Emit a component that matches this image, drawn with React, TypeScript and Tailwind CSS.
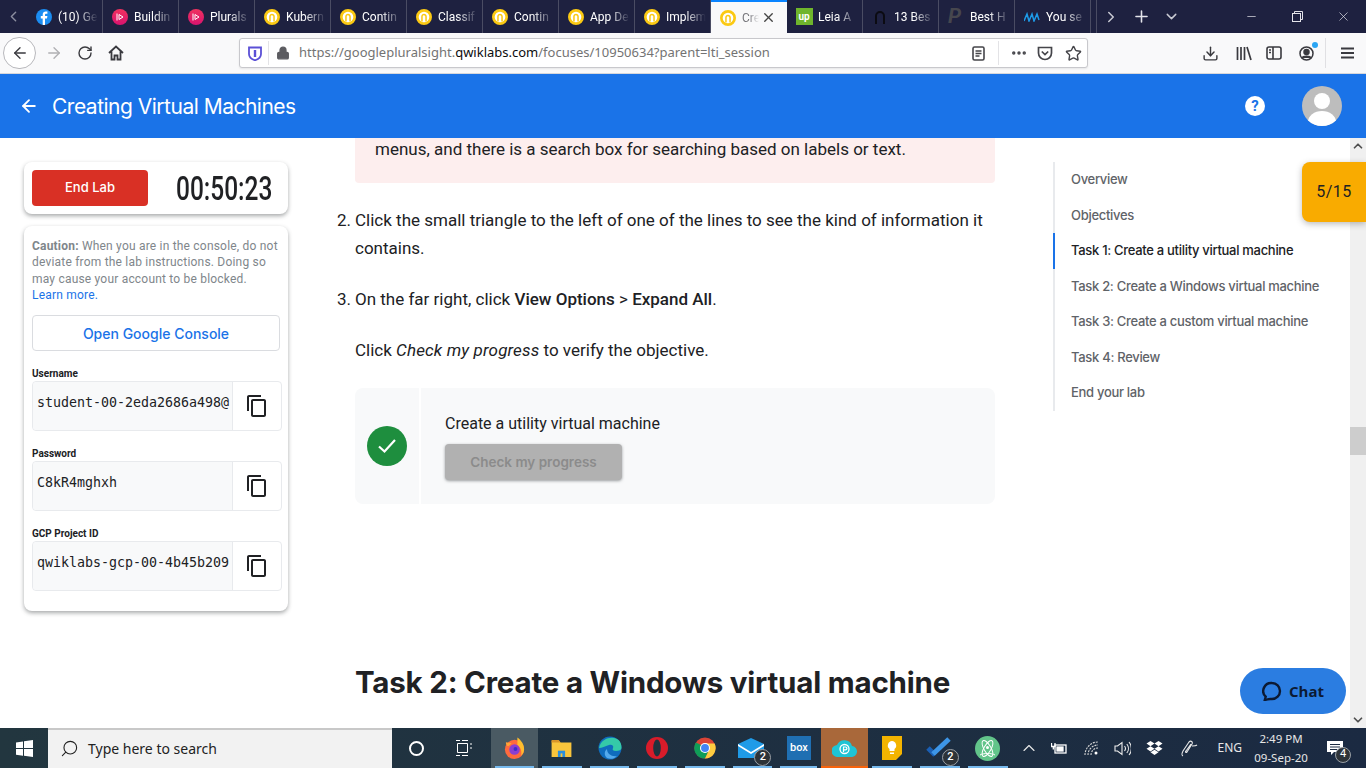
import { ArrowLeft, ArrowRight, ChevronDown, ChevronLeft, ChevronRight, ChevronUp, Download, Lock, Minus, MoreHorizontal, Plus, RotateCw, Search, Star, X } from "lucide-react";
import type { ReactNode } from "react";

function Qwik() {
  return (
    <svg width="18" height="18" viewBox="0 0 18 18">
      <circle cx="9" cy="9" r="7.5" fill="#fff" stroke="#fbc913" strokeWidth="3" />
      <path d="M6.700 14V8.500a2.300 2.300 0 0 1 4.600 0V14" fill="none" stroke="#fbc913" strokeWidth="1.700" />
    </svg>
  );
}

function Plural() {
  return (
    <svg width="16" height="16" viewBox="0 0 16 16">
      <defs>
        <linearGradient id="pl" x1="0" y1="0" x2="0" y2="1">
          <stop offset="0" stopColor="#f0325f" />
          <stop offset="1" stopColor="#d8136f" />
        </linearGradient>
      </defs>
      <circle cx="8" cy="8" r="8" fill="url(#pl)" />
      <path d="M5 4.500v7M7 5.500v5l4-2.500z" fill="none" stroke="#fff" strokeWidth="1" />
    </svg>
  );
}

function Fb() {
  return (
    <svg width="16" height="16" viewBox="0 0 16 16">
      <circle cx="8" cy="8" r="8" fill="#1b8df2" />
      <path d="M9 16V9.400h2l.4-2.300H9V5.800c0-.7.3-1.100 1.200-1.100h1.200V2.600C11 2.500 10.400 2.400 9.800 2.400 8 2.400 6.700 3.500 6.700 5.500v1.600H4.800v2.300h1.900V16z" fill="#fff" />
    </svg>
  );
}

const tabs: { icon: ReactNode; label: string; active?: boolean }[] = [
  { icon: <Fb />, label: "(10) Ge" },
  { icon: <Plural />, label: "Buildin" },
  { icon: <Plural />, label: "Plurals" },
  { icon: <Qwik />, label: "Kubern" },
  { icon: <Qwik />, label: "Contin" },
  { icon: <Qwik />, label: "Classif" },
  { icon: <Qwik />, label: "Contin" },
  { icon: <Qwik />, label: "App De" },
  { icon: <Qwik />, label: "Implem" },
  { icon: <Qwik />, label: "Cre", active: true },
  {
    icon: (
      <div className="flex h-[17px] w-[17px] shrink-0 items-center justify-center bg-[#6fb52c] text-[10px] font-bold lowercase leading-none text-white">
        up
      </div>
    ),
    label: "Leia A",
  },
  {
    icon: (
      <svg width="16" height="16" viewBox="0 0 16 16">
        <path d="M4 15V7a4 4 0 0 1 8 0v8" fill="none" stroke="#0b0b12" strokeWidth="2" />
      </svg>
    ),
    label: "13 Bes",
  },
  {
    icon: <span className="w-4 text-[21px] font-bold italic leading-none text-[#46464e]">P</span>,
    label: "Best H",
  },
  {
    icon: (
      <svg width="16" height="10" viewBox="0 0 16 10">
        <path d="M0 9l3-7 2 7 3-7 2 7 3-7 2 6" fill="none" stroke="#1e9be8" strokeWidth="1.500" />
      </svg>
    ),
    label: "You se",
  },
];

function TabBar() {
  return (
    <div className="flex h-[33px] shrink-0 items-stretch bg-[#1e2140] text-xs text-white">
      <div className="flex w-[27px] items-center justify-center text-[#8b8d9e]">
        <ChevronLeft size={17} strokeWidth={2} />
      </div>
      {tabs.map((t, i) => (
        <div
          key={i}
          className={
            t.active
              ? "flex w-[76px] items-center gap-[6px] border-t-[2px] border-[#0a84ff] bg-[#f9f9fa] pl-[9px] text-[#77777c]"
              : "flex w-[76px] items-center gap-[6px] border-r border-[#4a4c63] pl-[9px]"
          }
        >
          <div className="flex w-4 shrink-0 items-center justify-center">{t.icon}</div>
          <span
            className={
              t.active
                ? "w-[17px] overflow-hidden whitespace-nowrap [mask-image:linear-gradient(to_right,black_40%,transparent)]"
                : "w-[42px] overflow-hidden whitespace-nowrap [mask-image:linear-gradient(to_right,black_45%,transparent_95%)]"
            }
          >
            {t.label}
          </span>
          {t.active && <X size={15} strokeWidth={2.200} className="-ml-[4px] text-[#444]" />}
        </div>
      ))}
      <div className="ml-[5px] flex w-[28px] items-center justify-center border-l border-[#4a4c63] text-[#c9cad3]">
        <ChevronRight size={18} strokeWidth={2} />
      </div>
      <div className="flex w-[34px] items-center justify-center text-[#e4e4ea]">
        <Plus size={19} strokeWidth={2} />
      </div>
      <div className="flex w-[26px] items-center justify-center text-[#c9cad3]">
        <ChevronDown size={17} strokeWidth={2} />
      </div>
      <div className="ml-auto flex items-stretch text-[#e4e4ea]">
        <div className="flex w-[46px] items-center justify-center">
          <Minus size={13} strokeWidth={1.300} />
        </div>
        <div className="flex w-[46px] items-center justify-center">
          <svg width="11" height="11" viewBox="0 0 11 11" fill="none" stroke="currentColor">
            <rect x="0.5" y="2.500" width="8" height="8" />
            <path d="M2.500 2.500v-2h8v8h-2" />
          </svg>
        </div>
        <div className="flex w-[46px] items-center justify-center">
          <X size={15} strokeWidth={1.100} />
        </div>
      </div>
    </div>
  );
}

function NavBar() {
  return (
    <div className="flex h-[41px] shrink-0 items-center border-b border-[#d7d7db] bg-[#f9f9fa] text-[#3a3a3f]">
      <div className="ml-[3px] flex h-[32px] w-[33px] items-center justify-center rounded-full border border-[#b8b8bc] bg-white">
        <ArrowLeft size={18} strokeWidth={1.800} />
      </div>
      <ArrowRight size={18} strokeWidth={1.800} className="ml-[9px] text-[#b0b0b3]" />
      <RotateCw size={16} strokeWidth={2.100} className="ml-[14px]" />
      <svg width="16" height="16" viewBox="0 0 16 16" className="ml-[15px]" fill="none" stroke="currentColor" strokeWidth="1.800">
        <path d="M1 8l7-6.500L15 8M3.500 6.500V14.500h3v-4h3v4h3V6.500" />
      </svg>
      <div className="ml-[115px] flex h-[30px] w-[849px] items-center rounded-[3px] border border-[#c8c8cc] bg-white pl-[8px] shadow-[0_1px_2px_rgba(0,0,0,0.08)]">
        <svg width="14" height="15" viewBox="0 0 14 15">
          <path d="M1 1.500h12V8c0 3-3 5.300-6 6.300C4 13.300 1 11 1 8z" fill="none" stroke="#5b50d6" strokeWidth="1.800" />
          <path d="M7 4v7" stroke="#5b50d6" strokeWidth="2.400" />
        </svg>
        <div className="ml-[6px] h-[24px] w-px bg-[#e3e3e6]" />
        <Lock size={14} strokeWidth={2.400} className="ml-[7px] fill-[#5c5c61] text-[#5c5c61]" />
        <span className="ml-[9px] whitespace-nowrap font-['Noto_Sans',sans-serif] text-[13px] text-[#737373]">
          https://googlepluralsight.<span className="text-[#0c0c0d]">qwiklabs.com</span>/focuses/10950634?parent=lti_session
        </span>
        <div className="ml-auto flex items-center text-[#45454a]">
          <svg width="13" height="15" viewBox="0 0 13 15" fill="none" stroke="currentColor" strokeWidth="1.600">
            <rect x="1" y="1" width="11" height="13" rx="1.500" />
            <path d="M3.500 5h6M3.500 7.500h6M3.500 10h4" />
          </svg>
          <div className="ml-[13px] h-[24px] w-px bg-[#e3e3e6]" />
          <MoreHorizontal size={18} strokeWidth={2.600} className="ml-[11px]" />
          <svg width="16" height="15" viewBox="0 0 16 15" className="ml-[9px]" fill="none" stroke="currentColor" strokeWidth="1.700">
            <path d="M1.500 1.500h13V7a6.500 6.500 0 0 1-13 0z" />
            <path d="M4.800 5.500L8 8.600l3.200-3.100" />
          </svg>
          <Star size={17} strokeWidth={2} className="ml-[12px] mr-[5px]" />
        </div>
      </div>
      <Download size={17} strokeWidth={2} className="ml-[114px]" />
      <svg width="16" height="15" viewBox="0 0 16 15" className="ml-[17px]" stroke="currentColor" strokeWidth="1.700" fill="none">
        <path d="M1.500 1v13M5 1v13M8.500 1v13M11 1l4 13" />
      </svg>
      <svg width="16" height="14" viewBox="0 0 16 14" className="ml-[14px]" stroke="currentColor" strokeWidth="1.600" fill="none">
        <rect x="1" y="1" width="14" height="12" rx="2" />
        <path d="M7 1v12M3 4h2M3 6.500h2" />
      </svg>
      <div className="relative ml-[17px]">
        <svg width="15" height="15" viewBox="0 0 15 15" fill="none" stroke="currentColor" strokeWidth="1.500">
          <circle cx="7.500" cy="7.500" r="6.500" />
          <circle cx="7.500" cy="6" r="2.500" fill="currentColor" />
          <path d="M3 12c1-2.500 8-2.500 9 0" fill="currentColor" />
        </svg>
        <div className="absolute -right-[4px] -top-[4px] h-[6px] w-[6px] rounded-full bg-[#2ba5f3]" />
      </div>
      <div className="ml-[11px] h-[30px] w-px bg-[#e0e0e3]" />
      <svg width="13" height="12" viewBox="0 0 13 12" className="ml-[15px]" stroke="currentColor" strokeWidth="1.800">
        <path d="M0 1.500h13M0 6h13M0 10.500h13" />
      </svg>
    </div>
  );
}

function Header() {
  return (
    <div className="flex h-[64px] shrink-0 items-center bg-[#1a73e8] text-white">
      <ArrowLeft size={20} strokeWidth={2.200} className="ml-[19px]" />
      <div className="ml-[13px] mt-[1px] font-['Inter',sans-serif] text-[21px] tracking-[-0.5px]">Creating Virtual Machines</div>
      <div className="ml-auto flex h-[20px] w-[20px] items-center justify-center rounded-full bg-white text-[15px] font-bold text-[#1a73e8]">
        ?
      </div>
      <div className="ml-[37px] mr-[24px] flex h-[40px] w-[40px] items-end justify-center overflow-hidden rounded-full bg-[#bdbdbd]">
        <svg width="40" height="40" viewBox="0 0 40 40" fill="#fff">
          <circle cx="20" cy="15" r="8" />
          <ellipse cx="20" cy="36" rx="14" ry="11" />
        </svg>
      </div>
    </div>
  );
}

function CopyIcon() {
  return (
    <svg width="24" height="24" viewBox="0 0 24 24" fill="#202124">
      <path d="M16 1H4c-1.100 0-2 .9-2 2v14h2V3h12V1zm3 4H8c-1.100 0-2 .9-2 2v14c0 1.100.9 2 2 2h11c1.100 0 2-.9 2-2V7c0-1.100-.9-2-2-2zm0 16H8V7h11v14z" />
    </svg>
  );
}

function Credential({ label, value }: { label: string; value: string }) {
  return (
    <div className="mt-[15px]">
      <div className="h-[15px] text-[10px] font-bold leading-[15px] text-[#202124]">{label}</div>
      <div className="flex h-[50px] w-[250px] rounded border border-[#e8eaed] bg-white">
        <div className="w-[199px] overflow-hidden whitespace-nowrap rounded-l bg-[#f8f9fa] pl-[4px] pt-[12px] font-['DejaVu_Sans_Mono',monospace] text-[13.300px] leading-[18px] text-[#202124]">
          {value}
        </div>
        <div className="flex flex-1 items-center justify-center border-l border-[#e8eaed]">
          <CopyIcon />
        </div>
      </div>
    </div>
  );
}

function LabSidebar() {
  return (
    <div className="ml-[24px] w-[264px] shrink-0 pt-[24px]">
      <div className="flex h-[52px] items-center rounded-lg bg-white pl-[8px] shadow-[0_2px_4px_rgba(60,64,67,0.45)]">
        <div className="flex h-[36px] w-[116px] items-center justify-center rounded bg-[#d93025] font-['Inter',sans-serif] text-[13px] font-medium text-white">
          End Lab
        </div>
        <div className="ml-[28px] w-[95px] origin-left scale-x-[0.72] whitespace-nowrap font-['Roboto',sans-serif] text-[34px] font-medium leading-none text-[#202124]">
          00:50:23
        </div>
      </div>
      <div className="mt-[12px] h-[385px] rounded-lg bg-white px-[8px] pt-[12px] shadow-[0_2px_4px_rgba(60,64,67,0.45)]">
        <p className="text-xs leading-[16.300px] tracking-[0.2px] text-[#80868b]">
          <b>Caution:</b> When you are in the console, do not deviate from the lab instructions. Doing so may cause your account to be blocked.
          <br />
          <span className="text-[#1a73e8]">Learn more.</span>
        </p>
        <div className="mt-[12px] flex h-[36px] w-[248px] items-center justify-center rounded border border-[#dadce0] font-['Inter',sans-serif] text-[14px] font-medium text-[#1a73e8]">
          Open Google Console
        </div>
        <Credential label="Username" value="student-00-2eda2686a498@" />
        <Credential label="Password" value="C8kR4mghxh" />
        <Credential label="GCP Project ID" value="qwiklabs-gcp-00-4b45b209" />
      </div>
    </div>
  );
}

function Article() {
  return (
    <div className="ml-[49px] w-[658px] shrink-0 text-[17px] leading-[28px] text-[#202124]">
      <div className="ml-[18px] h-[45px] rounded-b-sm bg-[#fdeeee] pl-[20px]">
        <p className="leading-[22px]">menus, and there is a search box for searching based on labels or text.</p>
      </div>
      <div className="mt-[23px] flex">
        <span className="w-[18px] shrink-0">2.</span>
        <p>Click the small triangle to the left of one of the lines to see the kind of information it contains.</p>
      </div>
      <div className="mt-[23px] flex">
        <span className="w-[18px] shrink-0">3.</span>
        <p>
          On the far right, click <b className="font-medium">View Options</b> &gt; <b className="font-medium">Expand All</b>.
        </p>
      </div>
      <p className="ml-[18px] mt-[23px]">
        Click <i className="tracking-[0.15px]">Check my progress</i> to verify the objective.
      </p>
      <div className="ml-[18px] mt-[24px] flex h-[116px] rounded-lg bg-[#f8f9fa] text-base">
        <div className="flex w-[66px] shrink-0 items-center justify-center border-r-2 border-white">
          <div className="flex h-[40px] w-[40px] items-center justify-center rounded-full bg-[#1e8e3e]">
            <svg width="20" height="16" viewBox="0 0 20 16" fill="none" stroke="#fff" strokeWidth="2.200">
              <path d="M2 8.500l5.500 5L18 2" />
            </svg>
          </div>
        </div>
        <div className="ml-[24px] pt-[22px]">
          <p className="leading-[28px]">Create a utility virtual machine</p>
          <div className="mt-[6px] flex h-[36px] w-[177px] items-center justify-center rounded bg-[#b1b1b1] font-['Inter',sans-serif] text-[13.500px] font-semibold text-[#8b8b8b] shadow-[0_1px_3px_rgba(60,64,67,0.5)]">
            Check my progress
          </div>
        </div>
      </div>
      <h2 className="ml-[18px] mt-[158px] whitespace-nowrap font-['Inter',sans-serif] text-[29.500px] font-bold leading-[40px] tracking-[-0.2px] text-[#202124]">
        Task 2: Create a Windows virtual machine
      </h2>
    </div>
  );
}

const toc = [
  "Overview",
  "Objectives",
  "Task 1: Create a utility virtual machine",
  "Task 2: Create a Windows virtual machine",
  "Task 3: Create a custom virtual machine",
  "Task 4: Review",
  "End your lab",
];

function Toc() {
  return (
    <div className="ml-[58px] mt-[24px] h-[249px] w-[297px] shrink-0 border-l-2 border-[#e8eaed] font-['Inter',sans-serif] text-[13px] tracking-[-0.3px] text-[#5f6368]">
      {toc.map((t, i) => (
        <div
          key={t}
          className={
            i === 2
              ? "-ml-[2px] flex h-[35.500px] items-center border-l-2 border-[#1a73e8] pl-[16px] font-medium text-[#202124]"
              : "-ml-[2px] flex h-[35.500px] items-center pl-[18px] font-medium"
          }
        >
          {t}
        </div>
      ))}
    </div>
  );
}

function Scrollbar() {
  return (
    <div className="flex w-[16px] shrink-0 flex-col items-center bg-[#f0f0f0] text-[#505050]">
      <ChevronUp size={14} strokeWidth={3} className="mt-[1px]" />
      <div className="mt-[274px] h-[28px] w-full bg-[#cdcdcd]" />
      <ChevronDown size={14} strokeWidth={3} className="mt-auto mb-[1px]" />
    </div>
  );
}

function Main() {
  return (
    <div className="relative flex min-h-0 flex-1 overflow-hidden bg-white">
      <LabSidebar />
      <Article />
      <Toc />
      <div className="flex-1" />
      <Scrollbar />
      <div className="absolute right-0 top-[24px] flex h-[60px] w-[64px] items-center justify-center rounded-l-lg bg-[#f9ab00] text-base tracking-[0.5px] text-[#202124] shadow-[0_2px_6px_rgba(60,64,67,0.35)]">
        5/15
      </div>
      <div className="absolute left-[1240px] top-[530px] flex h-[46px] w-[106px] items-center justify-center gap-[7px] rounded-full bg-[#2b7de1] font-['Open_Sans',sans-serif] text-[15px] font-bold text-[#0c1a33]">
        <svg width="20" height="20" viewBox="0 0 20 20" fill="none" stroke="#0c1a33" strokeWidth="2.400">
          <path d="M10 2a8 8 0 0 1 0 16c-1.500 0-3-.2-4.500.3L2.800 19l.9-3.300A8 8 0 0 1 10 2z" />
        </svg>
        Chat
      </div>
    </div>
  );
}

function TaskIcon({ children, w = 47.700, line = true, bg = "" }: { children: ReactNode; w?: number; line?: boolean; bg?: string }) {
  return (
    <div className={`relative flex h-full shrink-0 items-center justify-center ${bg}`} style={{ width: w }}>
      {children}
      {line && <div className="absolute bottom-0 left-[4px] right-[4px] h-[2px] bg-[#76b9ed]" />}
    </div>
  );
}

function Count({ n }: { n: string }) {
  return (
    <div className="absolute bottom-[2px] right-[5px] flex h-[17px] w-[17px] items-center justify-center rounded-full border border-[#9aa0a6] bg-[#2d3338] text-[11px] font-medium text-white">
      {n}
    </div>
  );
}

function Taskbar() {
  return (
    <div className="flex h-[40px] shrink-0 items-stretch bg-gradient-to-r from-[#22363f] to-[#1b2a42] text-white">
      <div className="flex w-[48px] items-center justify-center">
        <svg width="17" height="17" viewBox="0 0 17 17" fill="#fff">
          <path d="M0 2.400l7-1v6.700H0zM8 1.200L17 0v8.100H8zM0 9h7v6.700l-7-1zM8 9h9v8l-9-1.200z" />
        </svg>
      </div>
      <div className="flex w-[344px] items-center border-t-[2px] border-[#c8c8c8] bg-[#f2f2f2] pb-[2px] pl-[12px] text-[#222]">
        <Search size={19} strokeWidth={1.400} className="-scale-x-100" />
        <span className="ml-[9px] font-['Noto_Sans',sans-serif] text-[14px]">Type here to search</span>
      </div>
      <div className="flex w-[48px] items-center justify-center">
        <div className="h-[15px] w-[15px] rounded-full border-[2.500px] border-white" />
      </div>
      <div className="flex w-[51px] items-center justify-center pr-[2px]">
        <svg width="17" height="16" viewBox="0 0 17 16" fill="none" stroke="#fff">
          <path d="M0 .5h4M6 .5h6M0 15.500h4M6 15.500h6M1.500 3.500h10v9h-10zM15 3v2M15 7v2" />
        </svg>
      </div>
      <TaskIcon bg="bg-[#4a5a63]" w={47}>
        <svg width="23" height="24" viewBox="0 0 24 24">
          <circle cx="12" cy="13.500" r="10" fill="#ff6a3d" />
          <path d="M15 1c4 3 7 7 7 12 0 3-1 5-3 7 1-6-1-9-4-11z" fill="#ffbd2e" />
          <path d="M3 6c0 3 1 4 3 4l3-3z" fill="#ffa436" />
          <circle cx="12" cy="13.500" r="5.500" fill="#8a3fd1" />
          <circle cx="13" cy="13" r="2" fill="#3a2fc9" />
        </svg>
      </TaskIcon>
      <TaskIcon>
        <svg width="21" height="18" viewBox="0 0 22 20">
          <path d="M0 2h8l2 2h12v16H0z" fill="#f9c53c" />
          <path d="M0 1h8l2 3H0z" fill="#d9952a" />
          <path d="M7 13h8v7H7z" fill="#2a8fdc" />
          <path d="M10 16h2v4h-2z" fill="#f9c53c" />
        </svg>
      </TaskIcon>
      <TaskIcon>
        <svg width="24" height="24" viewBox="0 0 24 24">
          <circle cx="12" cy="12" r="11.500" fill="#0f6cbd" />
          <path d="M1 12C3 3 12 .5 18 2.500c4 1.500 5.500 5 5.500 9.500 0 2-2.500 3-5.500 3-3 0-4-1-3-3 1-2-1-4-4-3-4 1-7 3-10 3z" fill="#35c9a8" />
          <path d="M9 13c0 5 5 8 10 7-3 3-7 3.500-10 2-3-2-3-7 0-9z" fill="#53a9ec" />
        </svg>
      </TaskIcon>
      <TaskIcon>
        <svg width="22" height="22" viewBox="0 0 22 22">
          <circle cx="11" cy="11" r="11" fill="#d91c2a" />
          <ellipse cx="11" cy="11" rx="3.800" ry="8.500" fill="#20333f" />
        </svg>
      </TaskIcon>
      <TaskIcon>
        <svg width="22" height="22" viewBox="0 0 24 24">
          <circle cx="12" cy="12" r="11.500" fill="#db4437" />
          <path d="M2 6A11.500 11.500 0 0 0 12 23.500L17 13z" fill="#0f9d58" />
          <path d="M12 23.500A11.500 11.500 0 0 0 22.500 7H12l5 6z" fill="#ffcd40" />
          <circle cx="12" cy="12" r="5.500" fill="#fff" />
          <circle cx="12" cy="12" r="4.300" fill="#4285f4" />
        </svg>
      </TaskIcon>
      <TaskIcon>
        <svg width="26" height="20" viewBox="0 0 26 20" className="-translate-x-[2px]">
          <path d="M0 6L13 0l13 6v14H0z" fill="#1f9be8" />
          <path d="M0 6l13 8 13-8v2l-13 8L0 8z" fill="#fff" />
        </svg>
        <Count n="2" />
      </TaskIcon>
      <TaskIcon w={45}>
        <div className="flex h-[24px] w-[24px] items-center justify-center bg-[#1f6fb2] text-[11px] font-medium text-white">box</div>
      </TaskIcon>
      <TaskIcon w={47} line={false} bg="bg-[#a9683a]">
        <svg width="25" height="18" viewBox="0 0 25 18">
          <path d="M6 18a6 6 0 0 1-1-12 8 8 0 0 1 15 1 5.500 5.500 0 0 1-1 11z" fill="#1fc4d4" />
          <circle cx="12.500" cy="10" r="4.500" fill="none" stroke="#fff" strokeWidth="1.300" />
          <path d="M11.500 13V8h2a1.300 1.300 0 0 1 0 2.800h-2" fill="none" stroke="#fff" strokeWidth="1.200" />
        </svg>
        <div className="absolute bottom-0 left-0 right-0 h-[2px] bg-[#f7630c]" />
      </TaskIcon>
      <TaskIcon>
        <svg width="20" height="24" viewBox="0 0 20 24">
          <path d="M0 0h20v18l-6 6H0z" fill="#f4b400" />
          <path d="M10 5a4.500 4.500 0 0 0-2.500 8v2h5v-2A4.500 4.500 0 0 0 10 5zM8 16.500h4V18H8z" fill="#fff" />
        </svg>
      </TaskIcon>
      <TaskIcon>
        <svg width="26" height="22" viewBox="0 0 26 22" className="-translate-x-[1px]" fill="none" strokeWidth="5">
          <path d="M2 11l7 7" stroke="#1a5fb4" />
          <path d="M7 17L23 2" stroke="#3d96e8" />
        </svg>
        <Count n="2" />
      </TaskIcon>
      <TaskIcon>
        <svg width="25" height="25" viewBox="0 0 25 25" fill="none">
          <circle cx="12.500" cy="12.500" r="12.500" fill="#62c48a" />
          <g stroke="#fff" strokeWidth="1">
            <ellipse cx="12.500" cy="12.500" rx="9" ry="3.500" transform="rotate(60 12.500 12.500)" />
            <ellipse cx="12.500" cy="12.500" rx="9" ry="3.500" transform="rotate(120 12.500 12.500)" />
            <path d="M5 19c3-2 12-2 15 0" />
          </g>
          <circle cx="12.500" cy="11.500" r="1.500" fill="#fff" />
        </svg>
      </TaskIcon>
      <div className="ml-[5px] flex flex-1 items-center text-[#e6e6e6]">
        <ChevronUp size={20} strokeWidth={1.400} className="ml-[2px]" />
        <svg width="16" height="13" viewBox="0 0 16 13" className="ml-[12px]" fill="none" stroke="#fff" strokeWidth="1.300">
          <rect x="4" y="3" width="11" height="8" />
          <path d="M0.500 1v3.500h3.500V1M2.300 4.500v3" />
          <rect x="6" y="5" width="6" height="4" fill="#fff" />
        </svg>
        <svg width="16" height="15" viewBox="0 0 16 15" className="ml-[17px]" fill="none" stroke="#d8d8d8" strokeWidth="1.100" strokeDasharray="2 1">
          <path d="M1 14A13 13 0 0 1 14 1M4 14A10 10 0 0 1 14 4M7 14a7 7 0 0 1 7-7" />
          <circle cx="12" cy="12" r="1.500" fill="#fff" stroke="none" />
        </svg>
        <svg width="17" height="15" viewBox="0 0 17 15" className="ml-[14px]" fill="none" stroke="#eee" strokeWidth="1.100">
          <path d="M1 5h2.500L8 1.500v12L3.500 10H1zM10.500 5a4 4 0 0 1 0 5M12.800 3a7 7 0 0 1 0 9M15 1a10 10 0 0 1 0 13" />
        </svg>
        <svg width="17" height="15" viewBox="0 0 17 15" className="ml-[15px]" fill="#fff">
          <path d="M4.500 0L8.500 2.600 4.500 5.200.5 2.600zM12.500 0l4 2.600-4 2.600-4-2.600zM.5 7.800l4-2.600 4 2.600-4 2.600zM12.500 5.200l4 2.600-4 2.600-4-2.600zM4.500 11.300l4-2.500 4 2.500-4 2.700z" />
        </svg>
        <svg width="17" height="18" viewBox="0 0 17 18" className="ml-[18px]" fill="none" stroke="#eaeaea" strokeWidth="1.100">
          <path d="M2 17c-2-1-1-3 0-5l6-9c2-2 4 0 3 2l-5 8c-1 1-2 0-1-1l5-7M11 7c2 0 4 0 5-1" />
        </svg>
        <span className="ml-[20px] font-['Noto_Sans',sans-serif] text-xs">ENG</span>
        <div className="ml-[8px] w-[62px] text-center font-['Noto_Sans',sans-serif] text-[11.500px] leading-[19px]">
          <div>2:49 PM</div>
          <div>09-Sep-20</div>
        </div>
        <div className="relative ml-[15px]">
          <svg width="16" height="15" viewBox="0 0 16 15" fill="#fff">
            <path d="M0 0h16v11H7l-3 3v-3H0zM3 3h10v1H3zM3 5.500h10v1H3zM3 8h7v1H3z" fillRule="evenodd" />
          </svg>
          <div className="absolute -bottom-[7px] -right-[8px] flex h-[16px] w-[16px] items-center justify-center rounded-full border border-[#9aa0a6] bg-[#2d3338] text-[11px] text-white">
            4
          </div>
        </div>
      </div>
    </div>
  );
}

export default function App() {
  return (
    <div className="flex h-screen w-[1366px] flex-col overflow-hidden font-['Roboto',sans-serif]">
      <TabBar />
      <NavBar />
      <Header />
      <Main />
      <Taskbar />
    </div>
  );
}
